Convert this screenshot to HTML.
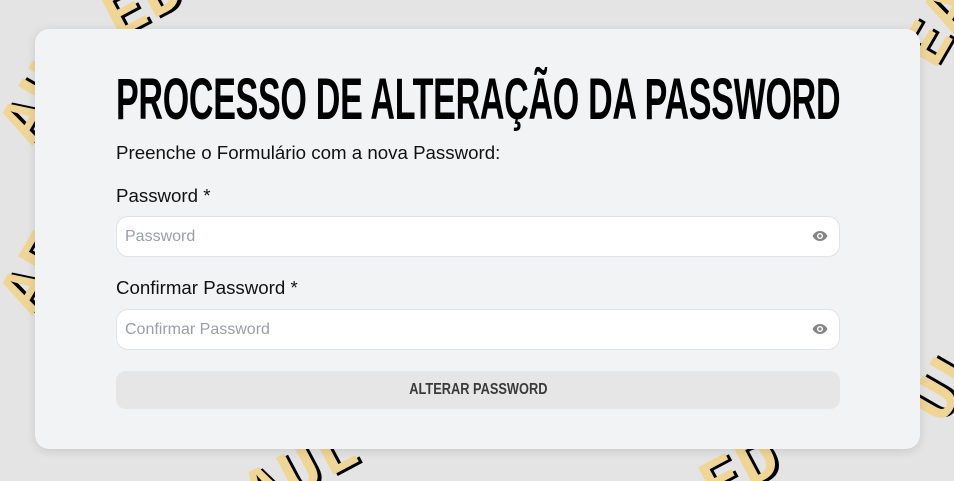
<!DOCTYPE html>
<html><head><meta charset="utf-8"><style>
html,body{margin:0;width:954px;height:481px;overflow:hidden;background:#e4e4e4;font-family:"Liberation Sans",sans-serif}
.wrap{position:fixed;left:0;top:0;width:954px;height:481px;overflow:hidden;background:#e4e4e4}
.bg{position:absolute;left:0;top:0}
.bg text{font:bold 64px "Liberation Mono",monospace;fill:#efd697;stroke:#000;stroke-width:0;letter-spacing:2px}
.card{position:absolute;left:35px;top:29px;width:885px;height:420px;background:#f2f3f5;border-radius:14px;box-shadow:0 2px 10px rgba(0,0,0,.12)}
h1{position:absolute;left:81px;top:42px;margin:0;font:bold 58px/1 "Liberation Sans",sans-serif;color:#000;transform:scaleX(.587);transform-origin:left top;white-space:nowrap;letter-spacing:-0.5px}
.p{position:absolute;left:81px;font-size:18.7px;color:#111}
.in{position:absolute;left:81px;width:722px;height:39px;background:#fff;border:1px solid #e2e3e6;border-radius:12px}
.in span{position:absolute;left:8px;top:11px;font-size:16px;color:#9a9ea6}
.in svg{position:absolute;right:11px;top:13px}
.btn{position:absolute;left:81px;top:342px;width:724px;height:38px;background:#e6e6e6;border-radius:10px;text-align:center}
.btn span{display:inline-block;font:bold 16px/38px "Liberation Sans",sans-serif;color:#3a3a3a;transform:scaleX(.8)}
</style></head><body><div class="wrap">
<svg class="bg" width="954" height="481" viewBox="0 0 954 481">
<g><text x="3" y="3" fill="#000" style="fill:#000" transform="rotate(-28 130 20)"><tspan x="113" y="33">EDU</tspan></text><text transform="rotate(-28 130 20)" x="110" y="30">EDU</text></g>
<g><text style="fill:#000" transform="rotate(-60 30 110)" x="3" y="133">AH</text><text transform="rotate(-60 30 110)" x="0" y="130">AH</text></g>
<g><text style="fill:#000" transform="rotate(-60 30 280)" x="3" y="303">AE</text><text transform="rotate(-60 30 280)" x="0" y="300">AE</text></g>
<g><text style="fill:#000" transform="rotate(-28 300 470)" x="243" y="493">AUL</text><text transform="rotate(-28 300 470)" x="240" y="490">AUL</text></g>
<g><text style="fill:#000" transform="rotate(-28 740 470)" x="703" y="493">ED</text><text transform="rotate(-28 740 470)" x="700" y="490">ED</text></g>
<g><text style="fill:#000" transform="rotate(-60 935 30)" x="903" y="53">EA</text><text transform="rotate(-60 935 30)" x="900" y="50">EA</text></g>
<g><text style="fill:#000" transform="rotate(-60 940 390)" x="913" y="413">UL</text><text transform="rotate(-60 940 390)" x="910" y="410">UL</text></g>
</svg>
<div class="card">
<h1>PROCESSO DE ALTERAÇÃO DA PASSWORD</h1>
<div class="p" style="top:113px">Preenche o Formulário com a nova Password:</div>
<div class="p" style="top:156px">Password *</div>
<div class="in" style="top:187px"><span>Password</span><svg width="16" height="12" viewBox="0 0 16 12"><path d="M8 1C4 1 1.5 4 .5 6c1 2 3.5 5 7.5 5s6.5-3 7.5-5C14.5 4 12 1 8 1z" fill="#858585"/><circle cx="8" cy="6" r="3" fill="#fff"/><circle cx="8" cy="6" r="1.6" fill="#858585"/></svg></div>
<div class="p" style="top:248px">Confirmar Password *</div>
<div class="in" style="top:280px"><span>Confirmar Password</span><svg width="16" height="12" viewBox="0 0 16 12"><path d="M8 1C4 1 1.5 4 .5 6c1 2 3.5 5 7.5 5s6.5-3 7.5-5C14.5 4 12 1 8 1z" fill="#858585"/><circle cx="8" cy="6" r="3" fill="#fff"/><circle cx="8" cy="6" r="1.6" fill="#858585"/></svg></div>
<div class="btn"><span>ALTERAR PASSWORD</span></div>
</div>
</div></body></html>
